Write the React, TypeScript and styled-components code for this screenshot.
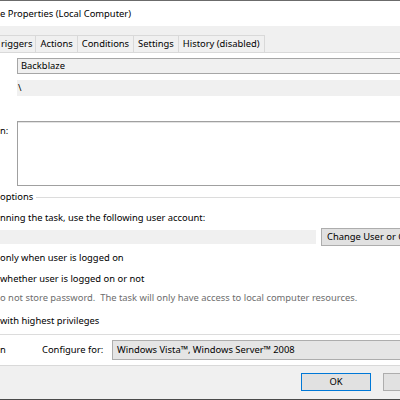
import React from "react";
import styled, { createGlobalStyle } from "styled-components";

const GlobalStyle = createGlobalStyle`
  html, body {
    margin: 0;
    padding: 0;
    background: #f0f0f0;
  }
  body {
    font-family: "Noto Sans", "Liberation Sans", sans-serif;
    font-size: 9.4px;
    color: #000;
  }
`;

const Window = styled.div`
  width: 400px;
  height: 400px;
  box-sizing: border-box;
  overflow: hidden;
  border-top: 1px solid #6b6b6b;
  border-bottom: 1px solid #4a4a4a;
  background: #f0f0f0;
`;

const Frame = styled.div`
  width: 460px;
  display: flex;
  flex-direction: column;
`;

const TitleBar = styled.div`
  height: 25px;
  background: #ffffff;
  display: flex;
  align-items: center;
  line-height: 14px;
`;

const TabStrip = styled.div`
  margin-top: 9px;
  height: 17px;
  display: flex;
  align-items: stretch;
`;

const Tab = styled.div<{ $first?: boolean }>`
  box-sizing: border-box;
  display: flex;
  align-items: center;
  padding: ${(p) => (p.$first ? "0 3px 0 1px" : "0 4px")};
  border-top: 1px solid #d9d9d9;
  border-right: 1px solid #d9d9d9;
  background: #f0f0f0;
  line-height: 14px;
  white-space: nowrap;
`;

const Panel = styled.div`
  background: #ffffff;
  border-top: 1px solid #d9d9d9;
  border-bottom: 1px solid #d9d9d9;
  height: 312px;
  display: flex;
  flex-direction: column;
`;

const ReadOnlyBox = styled.div`
  box-sizing: border-box;
  margin: 5px 0 0 17px;
  height: 16px;
  background: #f0f0f0;
  border: 1px solid #a6a6a6;
  border-right: none;
  padding-left: 3px;
  display: flex;
  align-items: center;
  line-height: 14px;
`;

const PlainField = styled.div`
  box-sizing: border-box;
  margin: 6px 0 0 17px;
  height: 16px;
  background: #f0f0f0;
  padding-left: 1px;
  display: flex;
  align-items: center;
  line-height: 14px;
`;

const DescRow = styled.div`
  margin-top: 25px;
  display: flex;
  height: 65px;
`;

const SideLabel = styled.div`
  width: 17px;
  padding-top: 3px;
  line-height: 14px;
  box-sizing: border-box;
`;

const TextArea = styled.div`
  flex: 1;
  box-sizing: border-box;
  background: #ffffff;
  border: 1px solid #a0a0a0;
  border-right: none;
  box-shadow: inset 0 1px 0 #e3e3e3;
`;

const Group = styled.div`
  margin-top: 4px;
  padding-bottom: 6px;
  border-bottom: 1px solid #dcdcdc;
  display: flex;
  flex-direction: column;
`;

const GroupHeader = styled.div`
  height: 14px;
  display: flex;
  align-items: center;
  gap: 3px;
  line-height: 14px;
`;

const GroupLine = styled.div`
  flex: 1;
  height: 1px;
  background: #dcdcdc;
`;

const Line = styled.div<{ $top: number; $muted?: boolean }>`
  margin-top: ${(p) => p.$top}px;
  line-height: 14px;
  height: 14px;
  white-space: nowrap;
  color: ${(p) => (p.$muted ? "#6d6d6d" : "#000")};
`;

const AccountRow = styled.div`
  margin-top: 3px;
  height: 18px;
  display: flex;
  align-items: center;
  gap: 5px;
  padding-right: 24px;
`;

const AccountField = styled.div`
  flex: 1;
  height: 14px;
  background: #f0f0f0;
`;

const Button = styled.div<{ $default?: boolean; $centered?: boolean; $width: number }>`
  box-sizing: border-box;
  width: ${(p) => p.$width}px;
  height: 18px;
  background: #e1e1e1;
  border: 1px solid ${(p) => (p.$default ? "#0078d7" : "#adadad")};
  display: flex;
  align-items: center;
  justify-content: ${(p) => (p.$centered ? "center" : "flex-start")};
  padding-left: ${(p) => (p.$centered ? 0 : 5)}px;
  line-height: 14px;
  white-space: nowrap;
  overflow: hidden;
`;

const ConfigRow = styled.div`
  margin-top: 5px;
  height: 20px;
  display: flex;
  align-items: center;
  line-height: 14px;
`;

const HiddenLabel = styled.div`
  width: 42px;
`;

const ConfigLabel = styled.div`
  width: 70px;
`;

const Combo = styled.div`
  flex: 1;
  box-sizing: border-box;
  height: 20px;
  background: #e5e5e5;
  border: 1px solid #adadad;
  border-right: none;
  padding-left: 4px;
  display: flex;
  align-items: center;
  white-space: nowrap;
`;

const ButtonBar = styled.div`
  height: 33px;
  box-sizing: border-box;
  padding: 7px 7px 0 0;
  display: flex;
  justify-content: flex-end;
  gap: 12px;
`;

const tabs = ["riggers", "Actions", "Conditions", "Settings", "History (disabled)"];

export default function App() {
  return (
    <>
      <GlobalStyle />
      <Window>
        <Frame>
          <TitleBar>e Properties (Local Computer)</TitleBar>
          <TabStrip>
            {tabs.map((t, i) => (
              <Tab key={t} $first={i === 0}>
                {t}
              </Tab>
            ))}
          </TabStrip>
          <Panel>
            <ReadOnlyBox>Backblaze</ReadOnlyBox>
            <PlainField>\</PlainField>
            <DescRow>
              <SideLabel>n:</SideLabel>
              <TextArea />
            </DescRow>
            <Group>
              <GroupHeader>
                <span>options</span>
                <GroupLine />
              </GroupHeader>
              <Line $top={7}>nning the task, use the following user account:</Line>
              <AccountRow>
                <AccountField />
                <Button $width={115}>Change User or Group...</Button>
              </AccountRow>
              <Line $top={5}>only when user is logged on</Line>
              <Line $top={7}>whether user is logged on or not</Line>
              <Line $top={5} $muted>
                o not store password.&nbsp; The task will only have access to local computer resources.
              </Line>
              <Line $top={9}>with highest privileges</Line>
            </Group>
            <ConfigRow>
              <HiddenLabel>n</HiddenLabel>
              <ConfigLabel>Configure for:</ConfigLabel>
              <Combo>Windows Vista™, Windows Server™ 2008</Combo>
            </ConfigRow>
          </Panel>
          <ButtonBar>
            <Button $default $centered $width={70}>
              OK
            </Button>
            <Button $centered $width={70}>
              Cancel
            </Button>
          </ButtonBar>
        </Frame>
      </Window>
    </>
  );
}
